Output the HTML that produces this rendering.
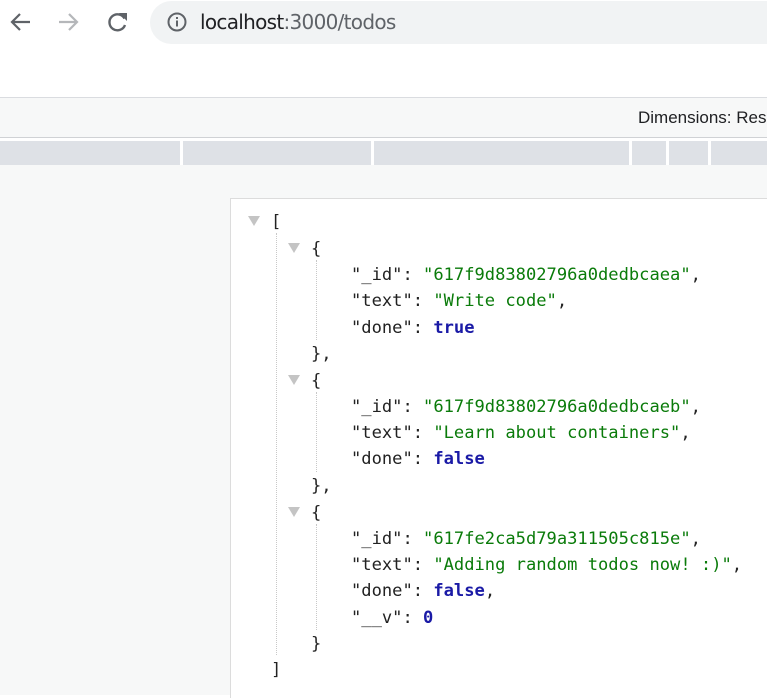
<!DOCTYPE html>
<html><head><style>
*{margin:0;padding:0;box-sizing:border-box}
body{width:767px;height:695px;overflow:hidden;background:#fff;position:relative;font-family:"Liberation Sans",sans-serif}
.addr{position:absolute;left:150px;top:1px;width:640px;height:43px;border-radius:22px;background:#f1f3f4}
.url{position:absolute;left:200px;top:10px;font-size:20px;color:#202124;font-family:"DejaVu Sans","Liberation Sans",sans-serif;letter-spacing:-0.7px}
.url span{color:#5f6368}
.t1{position:absolute;left:0;top:97px;width:767px;height:41px;background:#f7f8f8;border-top:1px solid #dadce0;border-bottom:1px solid #d0d2d5}
.dim{position:absolute;left:638px;top:108px;font-size:17px;color:#202124}
.bar{position:absolute;left:0;top:141px;width:767px;height:24px;background:#dee1e6}
.sep{position:absolute;top:141px;width:3px;height:24px;background:#fff}
.bg{position:absolute;left:0;top:165px;width:767px;height:530px;background:#f7f8f8}
.box{position:absolute;left:230px;top:198px;width:540px;height:500px;background:#fff;border-left:1px solid #dcdcdc;border-top:1px solid #dcdcdc}
.l{position:absolute;font-family:"DejaVu Sans Mono","Liberation Mono",monospace;font-size:17.1px;color:#222;white-space:pre;line-height:20px;margin-top:1px}
.s{color:#0a7b0a}.k{color:#1a1aa6;font-weight:bold}
.tri{position:absolute;width:0;height:0;border-left:6px solid transparent;border-right:6px solid transparent;border-top:10px solid #c4c4c4}
.v{position:absolute;width:0;border-left:1px dotted #c8c8c8}
</style></head><body>
<svg style="position:absolute;left:8px;top:10px" width="26" height="24" viewBox="0 0 26 24"><path d="M22 12H5M12 4l-8 8 8 8" fill="none" stroke="#5f6368" stroke-width="2.2"/></svg>
<svg style="position:absolute;left:56px;top:10px" width="26" height="24" viewBox="0 0 26 24"><path d="M3 12h17M13 4l8 8-8 8" fill="none" stroke="#b5b7ba" stroke-width="2.2"/></svg>
<svg style="position:absolute;left:106px;top:10px" width="24" height="24" viewBox="0 0 24 24"><path d="M18.5 8.5A8 8 0 1 0 19 15" fill="none" stroke="#5f6368" stroke-width="2.4"/><path d="M13 3h8v8z" fill="#5f6368"/></svg>
<div class="addr"></div>
<svg style="position:absolute;left:166px;top:11px" width="22" height="22" viewBox="0 0 22 22"><circle cx="11" cy="11" r="8.5" fill="none" stroke="#5f6368" stroke-width="2"/><rect x="10" y="9.5" width="2" height="6" fill="#5f6368"/><rect x="10" y="6" width="2" height="2" fill="#5f6368"/></svg>
<div class="url">localhost<span>:3000/todos</span></div>
<div class="t1"></div>
<div class="dim">Dimensions: Res</div>
<div class="bar"></div>
<div class="sep" style="left:180px"></div><div class="sep" style="left:371px"></div><div class="sep" style="left:629px"></div><div class="sep" style="left:666px"></div><div class="sep" style="left:708px"></div>
<div class="bg"></div>
<div class="box"></div>
<div class="tri" style="left:248px;top:216px"></div>
<div class="tri" style="left:288px;top:243px"></div>
<div class="tri" style="left:288px;top:375px"></div>
<div class="tri" style="left:288px;top:507px"></div>
<div class="v" style="left:276px;top:233px;height:422px"></div>
<div class="v" style="left:316px;top:260px;height:80px"></div>
<div class="v" style="left:316px;top:392px;height:80px"></div>
<div class="v" style="left:316px;top:524px;height:106px"></div>
<div class="l" style="left:271px;top:211px">[</div>
<div class="l" style="left:311px;top:238px">{</div>
<div class="l" style="left:351px;top:264px">"_id": <span class="s">"617f9d83802796a0dedbcaea"</span>,</div>
<div class="l" style="left:351px;top:290px">"text": <span class="s">"Write code"</span>,</div>
<div class="l" style="left:351px;top:317px">"done": <span class="k">true</span></div>
<div class="l" style="left:311px;top:343px">},</div>
<div class="l" style="left:311px;top:370px">{</div>
<div class="l" style="left:351px;top:396px">"_id": <span class="s">"617f9d83802796a0dedbcaeb"</span>,</div>
<div class="l" style="left:351px;top:422px">"text": <span class="s">"Learn about containers"</span>,</div>
<div class="l" style="left:351px;top:448px">"done": <span class="k">false</span></div>
<div class="l" style="left:311px;top:475px">},</div>
<div class="l" style="left:311px;top:502px">{</div>
<div class="l" style="left:351px;top:528px">"_id": <span class="s">"617fe2ca5d79a311505c815e"</span>,</div>
<div class="l" style="left:351px;top:554px">"text": <span class="s">"Adding random todos now! :)"</span>,</div>
<div class="l" style="left:351px;top:580px">"done": <span class="k">false</span>,</div>
<div class="l" style="left:351px;top:607px">"__v": <span class="k">0</span></div>
<div class="l" style="left:311px;top:633px">}</div>
<div class="l" style="left:271px;top:659px">]</div>
</body></html>
